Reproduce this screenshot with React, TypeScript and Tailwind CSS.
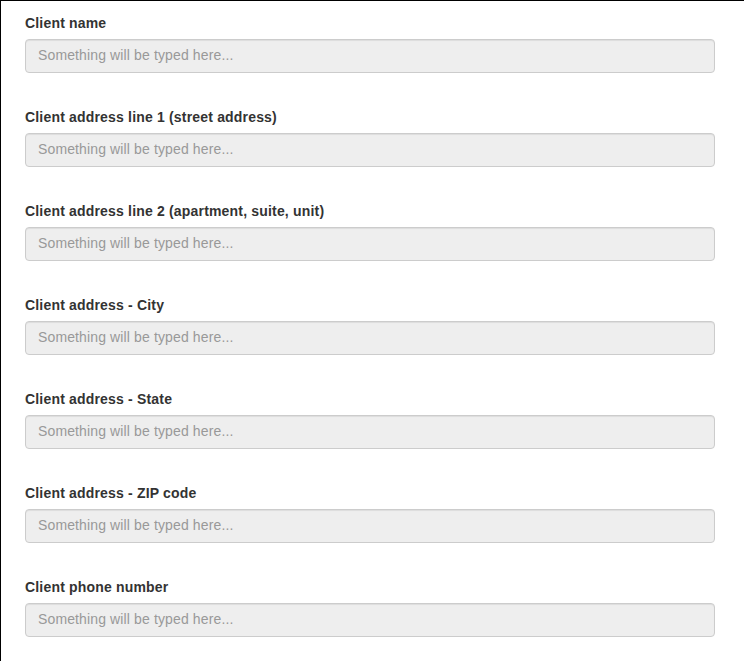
const fields = [
  "Client name",
  "Client address line 1 (street address)",
  "Client address line 2 (apartment, suite, unit)",
  "Client address - City",
  "Client address - State",
  "Client address - ZIP code",
  "Client phone number",
];

export default function App() {
  return (
    <div
      className="h-[661px] w-[744px] overflow-hidden border-l border-t border-black bg-white pl-6 pr-[29px] pt-[12px]"
      style={{ fontFamily: '"Liberation Sans", Arial, sans-serif' }}
    >
      {fields.map((label) => (
        <div key={label} className="mb-[34px]">
          <label className="mb-[6px] block text-[14px] font-bold leading-5 tracking-[0.18px] text-[#333]">
            {label}
          </label>
          <input
            disabled
            placeholder="Something will be typed here..."
            className="block h-[34px] w-full rounded-[4px] border border-[#ccc] bg-[#eee] px-3 pb-[2px] text-[14px] tracking-[0.13px] text-[#555] shadow-[inset_0_1px_1px_rgba(0,0,0,0.075)] placeholder:text-[#999]"
          />
        </div>
      ))}
    </div>
  );
}
